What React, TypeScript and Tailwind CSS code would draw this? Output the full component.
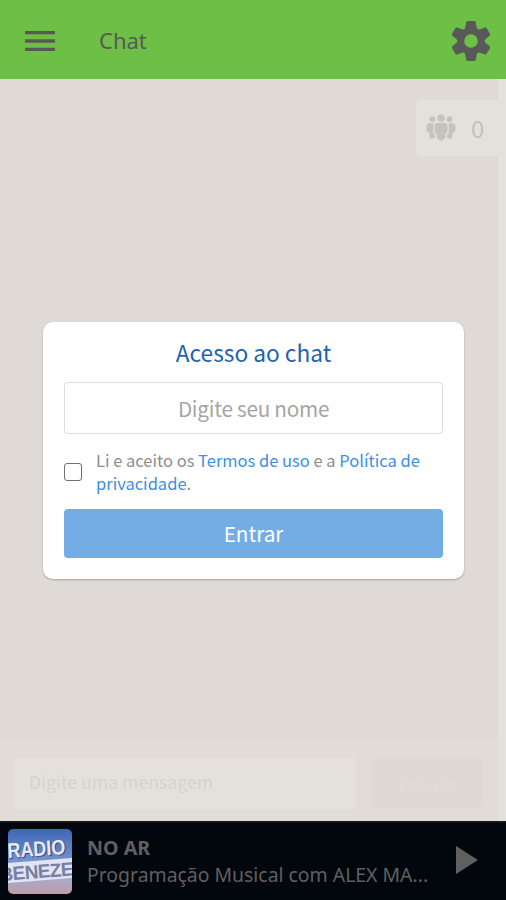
import { useState } from 'react';
import { MdMenu, MdPlayArrow } from 'react-icons/md';

function GearIcon() {
  return (
    <svg width="40" height="42" viewBox="-20 -21 40 42" fill="none" stroke="#595959">
      <circle r="10.300" strokeWidth="7" />
      <g fill="#595959" strokeWidth="3" strokeLinejoin="round">
        <path id="tooth" d="M-3.300-18.500H3.300L4.500-12H-4.500z" />
        <use href="#tooth" transform="rotate(60)" />
        <use href="#tooth" transform="rotate(120)" />
        <use href="#tooth" transform="rotate(180)" />
        <use href="#tooth" transform="rotate(240)" />
        <use href="#tooth" transform="rotate(300)" />
      </g>
    </svg>
  );
}

function Header({ title }: { title: string }) {
  return (
    <header className="flex h-[79px] shrink-0 items-center bg-[#6dbf46] pt-[3px] text-[#595959]">
      <button className="ml-5" aria-label="Menu">
        <MdMenu size={40} />
      </button>
      <h1 className="ml-[39px] flex-1 pb-[3px] text-[22px] leading-[30px]">{title}</h1>
      <button className="mr-[15px]" aria-label="Ajustes">
        <GearIcon />
      </button>
    </header>
  );
}

function PeopleIcon() {
  return (
    <svg width="30" height="28" viewBox="0 0 30 28" fill="#c6c2bd">
      <circle cx="15" cy="4" r="3.7" />
      <circle cx="6.4" cy="5.2" r="2.9" />
      <circle cx="23.6" cy="5.2" r="2.9" />
      <path d="M11 9h8q2.500 0 2.500 2.500v5.500q0 2-2 2.500v3.500q0 1.500-1.500 1.500l-1.500 2h-3l-1.500-2q-1.500 0-1.500-1.500v-3.500q-2-.5-2-2.500v-5.500q0-2.500 2.500-2.500z" />
      <path d="M3.500 9.300h3.800v9.500q.4 1.200 1.700 1.800v2.400q0 1.500-1.500 1.500H5q-1.500 0-1.500-1.500v-4Q.5 18 .5 15.500v-3q0-3 3-3.200z" />
      <path d="M26.500 9.300h-3.800v9.500q-.4 1.200-1.700 1.800v2.400q0 1.500 1.500 1.500H25q1.500 0 1.500-1.500v-4q3-1 3-3.500v-3q0-3-3-3.200z" />
    </svg>
  );
}

function AccessCard() {
  const [name, setName] = useState('');
  const [accepted, setAccepted] = useState(false);

  return (
    <section className="ml-[43px] w-[421px] rounded-[10px] bg-white px-[21px] pt-4 pb-[21px] shadow-[0_1px_2px_rgba(0,0,0,0.25)]">
      <h2 className="text-center text-[22.7px] leading-[30px] text-[#1e63ad]">Acesso ao chat</h2>
      <input
        value={name}
        onChange={(e) => setName(e.target.value)}
        placeholder="Digite seu nome"
        className="mt-[14px] block h-[52px] w-full rounded border border-[#dcdcdc] text-center text-[20.7px] tracking-[-0.25px] placeholder:text-[#a5a5a5]"
      />
      <div className="mt-[15px] flex items-center">
        <input
          type="checkbox"
          checked={accepted}
          onChange={(e) => setAccepted(e.target.checked)}
          className="size-[18px] shrink-0 appearance-none rounded-[3px] border border-[#6f6f6f]"
        />
        <p className="ml-[14px] text-[16.5px] leading-[23px] whitespace-nowrap text-[#8d8d8d]">
          Li e aceito os <a className="text-[#3d8fe8]">Termos de uso</a> e a <a className="text-[#3d8fe8]">Política de</a>
          <br />
          <a className="text-[#3d8fe8]">privacidade</a>.
        </p>
      </div>
      <button className="mt-[14px] block h-[49px] w-full rounded bg-[#74ade4] text-[20.7px] text-white">Entrar</button>
    </section>
  );
}

function Cover() {
  return (
    <svg className="shrink-0 rounded-[5px]" width="64" height="65" viewBox="0 0 64 65">
      <defs>
        <linearGradient id="sky" x1="0" y1="0" x2="0" y2="1">
          <stop offset="0" stopColor="#3c66b4" />
          <stop offset="0.5" stopColor="#7795cf" />
          <stop offset="0.75" stopColor="#a9a9cc" />
          <stop offset="1" stopColor="#bd9da6" />
        </linearGradient>
      </defs>
      <rect width="64" height="65" fill="url(#sky)" />
      <path d="M0 34L64 29V49L0 54z" fill="#e1e4f2" />
      <g fontFamily="Liberation Sans, sans-serif" fontWeight="700">
        <text x="1" y="30" fontSize="21" textLength="58" lengthAdjust="spacingAndGlyphs" fill="#3a4b80" transform="rotate(-4 0 30)">RADIO</text>
        <text x="0" y="29" fontSize="21" textLength="58" lengthAdjust="spacingAndGlyphs" fill="#e9e9f0" transform="rotate(-4 0 30)">RADIO</text>
        <text x="-8" y="51.500" fontSize="19" textLength="74" lengthAdjust="spacing" fill="#787fa6" transform="rotate(-4.500 0 51)">BENEZE</text>
      </g>
    </svg>
  );
}

function Player() {
  return (
    <footer className="flex h-[79px] shrink-0 items-center border-t-2 border-[#151515] bg-[#01070d] pl-2 text-[#606060]">
      <Cover />
      <div className="ml-[15px] w-[342px] pb-[2px]">
        <div className="text-[19.7px] leading-[27px] font-bold">NO AR</div>
        <div className="text-[19.4px] leading-[27px] whitespace-nowrap">Programação Musical com ALEX MA...</div>
      </div>
      <button className="mb-[3px] ml-[11px]" aria-label="Tocar">
        <MdPlayArrow size={48} />
      </button>
    </footer>
  );
}

export default function App() {
  return (
    <div className="flex h-[900px] w-[506px] flex-col overflow-hidden font-['Noto_Sans',sans-serif]">
      <Header title="Chat" />
      <main className="flex h-[742px] bg-[#e4e0dc] font-['Noto_Sans_CJK_SC',sans-serif]">
        <div className="flex w-[498px] flex-col bg-[#dfdad5]">
          <div className="mt-[21px] flex h-[56px] w-[82px] items-center self-end rounded-l bg-[#e4e0dc] pl-[10px]">
            <PeopleIcon />
            <span className="ml-[15px] text-[24px] leading-[30px] text-[#c4c0bb]">0</span>
          </div>
          <div className="flex flex-1 flex-col pt-[166px]">
            <AccessCard />
          </div>
          <div className="flex h-[81px] items-center bg-[#e1dcd7] pt-1 pl-[13px]">
            <div className="flex h-[52px] w-[343px] items-center rounded bg-[#e4e1dd] pb-[2px] pl-4 text-[17.7px] text-[#d6d2cd]">
              Digite uma mensagem
            </div>
            <button className="ml-4 h-[52px] w-[111px] rounded bg-[#e0d8d5] text-[20px] text-[#e1dbd7]">Enviar</button>
          </div>
        </div>
      </main>
      <Player />
    </div>
  );
}
